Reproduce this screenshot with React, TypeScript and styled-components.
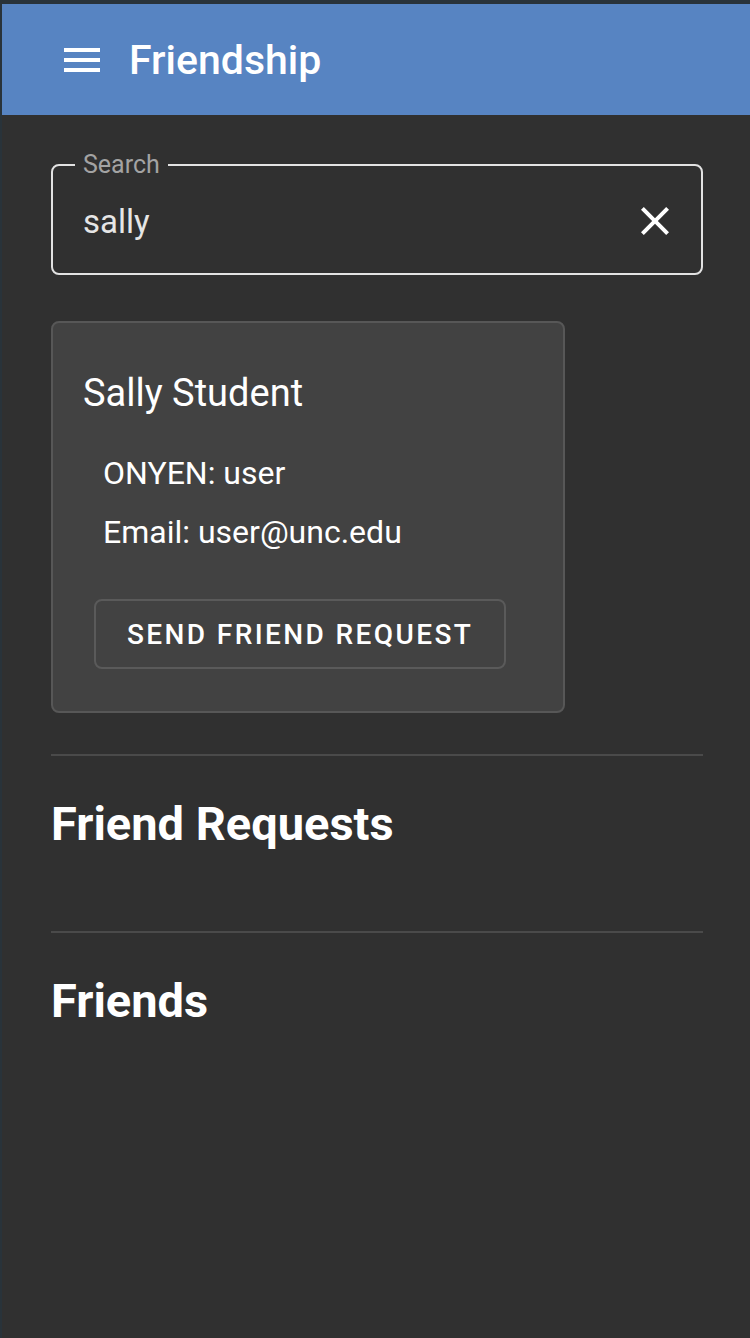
import React from "react";
import styled, { createGlobalStyle } from "styled-components";

const GlobalStyle = createGlobalStyle`
  html, body {
    margin: 0;
    padding: 0;
    background: #303030;
  }
  body {
    font-family: Roboto, "Noto Sans", "Liberation Sans", sans-serif;
    color: #ffffff;
  }
  * { box-sizing: border-box; }
`;

const Frame = styled.div`
  min-height: 1338px;
  background: #303030;
  border-top: 4px solid #29333a;
  border-left: 2px solid #29333a;
`;

const AppBar = styled.header`
  height: 111px;
  background: #5784c2;
  display: flex;
  align-items: center;
  padding-left: 56px;
`;

const MenuButton = styled.button`
  width: 48px;
  height: 48px;
  padding: 0;
  border: none;
  background: transparent;
  color: #ffffff;
  display: flex;
  align-items: center;
  justify-content: center;
`;

const Title = styled.h1`
  margin: 0 0 0 23px;
  font-size: 41px;
  font-weight: 500;
  line-height: 48px;
  color: #ffffff;
`;

const Main = styled.main`
  padding: 38px 47px 0 49px;
`;

const SearchField = styled.fieldset`
  margin: 0;
  border: 2px solid #e2e2e2;
  border-radius: 8px;
  padding: 0 22px 8px 22px;
  min-width: 0;
`;

const SearchLabel = styled.legend`
  padding: 0 8px;
  font-size: 25px;
  line-height: 24px;
  color: #a3a3a3;
`;

const SearchRow = styled.div`
  height: 88px;
  display: flex;
  align-items: center;
  padding-left: 8px;
`;

const SearchInput = styled.input`
  flex: 1;
  min-width: 0;
  border: none;
  outline: none;
  background: transparent;
  padding: 0;
  font-family: Roboto, "Noto Sans", sans-serif;
  font-size: 33px;
  line-height: 33px;
  color: #e6e6e6;
`;

const ClearButton = styled.button`
  width: 48px;
  height: 48px;
  padding: 0;
  border: none;
  background: transparent;
  color: #ffffff;
  display: flex;
  align-items: center;
  justify-content: center;
`;

const Card = styled.section`
  margin-top: 46px;
  width: 514px;
  background: #424242;
  border: 2px solid #575757;
  border-radius: 8px;
  padding: 48px 30px 42px 30px;
`;

const CardTitle = styled.h2`
  margin: 0;
  font-size: 38px;
  font-weight: 400;
  line-height: 44px;
`;

const InfoList = styled.div`
  margin-top: 29px;
  padding-left: 20px;
`;

const InfoLine = styled.p`
  margin: 0;
  font-size: 32px;
  line-height: 59px;
`;

const OutlinedButton = styled.button`
  margin: 37px 0 0 11px;
  height: 70px;
  padding: 0 31px;
  background: transparent;
  border: 2px solid #5a5a5a;
  border-radius: 8px;
  color: #ffffff;
  font-family: Roboto, "Noto Sans", sans-serif;
  font-size: 28px;
  font-weight: 500;
  letter-spacing: 2.4px;
  text-transform: uppercase;
`;

const Section = styled.section`
  margin-top: 41px;
  border-top: 2px solid #4a4a4a;
  padding-top: 38px;
  min-height: 177px;
`;

const SectionTitle = styled.h2`
  margin: 0;
  font-size: 47px;
  font-weight: 700;
  line-height: 60px;
`;

const SectionStack = styled.div`
  & > ${Section} + ${Section} {
    margin-top: 0;
    padding-top: 38px;
  }
`;

const MenuIcon = () => (
  <svg width="48" height="48" viewBox="0 0 24 24" fill="currentColor">
    <path d="M3 18h18v-2H3zm0-5h18v-2H3zm0-7v2h18V6z" />
  </svg>
);

const CloseIcon = () => (
  <svg width="48" height="48" viewBox="0 0 24 24" fill="currentColor">
    <path d="M19 6.41 17.59 5 12 10.59 6.41 5 5 6.41 10.59 12 5 17.59 6.41 19 12 13.41 17.59 19 19 17.59 13.41 12z" />
  </svg>
);

export default function App() {
  return (
    <>
      <GlobalStyle />
      <Frame>
        <AppBar>
          <MenuButton aria-label="menu">
            <MenuIcon />
          </MenuButton>
          <Title>Friendship</Title>
        </AppBar>
        <Main>
          <SearchField>
            <SearchLabel>Search</SearchLabel>
            <SearchRow>
              <SearchInput value="sally" readOnly />
              <ClearButton aria-label="clear">
                <CloseIcon />
              </ClearButton>
            </SearchRow>
          </SearchField>

          <Card>
            <CardTitle>Sally Student</CardTitle>
            <InfoList>
              <InfoLine>ONYEN: user</InfoLine>
              <InfoLine>Email: user@unc.edu</InfoLine>
            </InfoList>
            <OutlinedButton>Send Friend Request</OutlinedButton>
          </Card>

          <SectionStack>
            <Section>
              <SectionTitle>Friend Requests</SectionTitle>
            </Section>
            <Section>
              <SectionTitle>Friends</SectionTitle>
            </Section>
          </SectionStack>
        </Main>
      </Frame>
    </>
  );
}
